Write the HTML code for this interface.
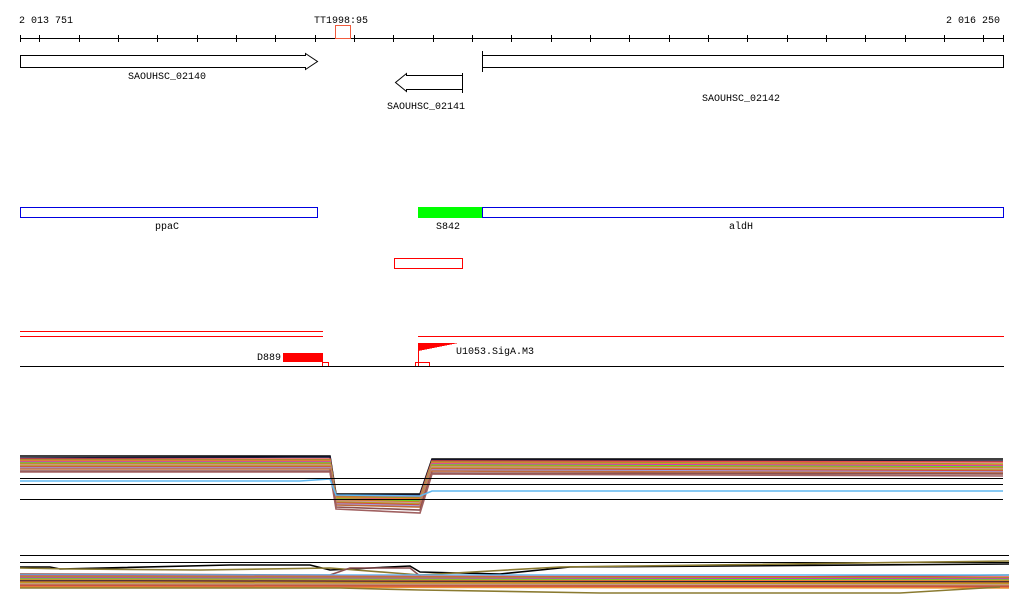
<!DOCTYPE html>
<html><head><meta charset="utf-8"><style>
html,body{margin:0;padding:0;background:#fff;width:1024px;height:611px;overflow:hidden}
text{font-family:"Liberation Mono","DejaVu Sans Mono",monospace;font-size:10px;fill:#000}
</style></head><body>
<svg width="1024" height="611" viewBox="0 0 1024 611" xmlns="http://www.w3.org/2000/svg" shape-rendering="crispEdges">
<text x="19" y="23">2 013 751</text>
<text x="314" y="23">TT1998:95</text>
<text x="946" y="23">2 016 250</text>
<line x1="20" y1="38.5" x2="1004" y2="38.5" stroke="#000"/>
<g stroke="#000">
<line x1="20.5" y1="35" x2="20.5" y2="42"/>
<line x1="39.5" y1="35" x2="39.5" y2="42"/><line x1="79.5" y1="35" x2="79.5" y2="42"/><line x1="118.5" y1="35" x2="118.5" y2="42"/><line x1="157.5" y1="35" x2="157.5" y2="42"/><line x1="197.5" y1="35" x2="197.5" y2="42"/><line x1="236.5" y1="35" x2="236.5" y2="42"/><line x1="275.5" y1="35" x2="275.5" y2="42"/><line x1="315.5" y1="35" x2="315.5" y2="42"/><line x1="354.5" y1="35" x2="354.5" y2="42"/><line x1="393.5" y1="35" x2="393.5" y2="42"/><line x1="433.5" y1="35" x2="433.5" y2="42"/><line x1="472.5" y1="35" x2="472.5" y2="42"/><line x1="511.5" y1="35" x2="511.5" y2="42"/><line x1="551.5" y1="35" x2="551.5" y2="42"/><line x1="590.5" y1="35" x2="590.5" y2="42"/><line x1="629.5" y1="35" x2="629.5" y2="42"/><line x1="669.5" y1="35" x2="669.5" y2="42"/><line x1="708.5" y1="35" x2="708.5" y2="42"/><line x1="747.5" y1="35" x2="747.5" y2="42"/><line x1="787.5" y1="35" x2="787.5" y2="42"/><line x1="826.5" y1="35" x2="826.5" y2="42"/><line x1="865.5" y1="35" x2="865.5" y2="42"/><line x1="905.5" y1="35" x2="905.5" y2="42"/><line x1="944.5" y1="35" x2="944.5" y2="42"/><line x1="983.5" y1="35" x2="983.5" y2="42"/><line x1="1003.5" y1="35" x2="1003.5" y2="42"/>
</g>
<rect x="335.5" y="25.5" width="15" height="13" fill="none" stroke="#f05a3c"/>
<polygon points="20.5,55.5 305.5,55.5 305.5,53.5 317.5,61.5 305.5,69.5 305.5,67.5 20.5,67.5" fill="#fff" stroke="#000" shape-rendering="auto"/>
<text x="128" y="79">SAOUHSC_02140</text>
<polygon points="462.5,75.5 406.5,75.5 406.5,73.5 395.5,82.5 406.5,91.5 406.5,89.5 462.5,89.5" fill="#fff" stroke="#000" shape-rendering="auto"/>
<line x1="462.5" y1="73" x2="462.5" y2="93" stroke="#000"/>
<text x="387" y="109">SAOUHSC_02141</text>
<polyline points="1004,55.5 482.5,55.5 482.5,67.5 1004,67.5" fill="none" stroke="#000"/>
<line x1="482.5" y1="51" x2="482.5" y2="72" stroke="#000"/>
<line x1="1003.5" y1="55" x2="1003.5" y2="68" stroke="#000"/>
<text x="702" y="101">SAOUHSC_02142</text>
<rect x="20.5" y="207.5" width="297" height="10" fill="none" stroke="#0000e0"/>
<text x="155" y="229">ppaC</text>
<rect x="418" y="207" width="64" height="11" fill="#00ff00"/>
<rect x="482.5" y="207.5" width="521" height="10" fill="none" stroke="#0000e0"/>
<text x="436" y="229">S842</text>
<text x="729" y="229">aldH</text>
<rect x="394.5" y="258.5" width="68" height="10" fill="none" stroke="#f00"/>
<line x1="20" y1="331.5" x2="323" y2="331.5" stroke="#f00"/>
<line x1="20" y1="336.5" x2="323" y2="336.5" stroke="#f00"/>
<line x1="418" y1="336.5" x2="1004" y2="336.5" stroke="#f00"/>
<text x="257" y="360">D889</text>
<rect x="283" y="353" width="40" height="9" fill="#f00"/>
<rect x="322.5" y="362.5" width="6" height="4" fill="none" stroke="#f00"/>
<polygon points="418,343 458,343 418,351" fill="#f00"/>
<line x1="418.5" y1="343" x2="418.5" y2="366" stroke="#f00"/>
<rect x="415.5" y="362.5" width="14" height="4" fill="none" stroke="#f00"/>
<text x="456" y="354">U1053.SigA.M3</text>
<line x1="20" y1="366.5" x2="1004" y2="366.5" stroke="#000"/>
<g fill="none" stroke-width="1.6" shape-rendering="auto">
<polyline stroke="#000" points="20,456 330,456 336,494 420,494 432,459 1003,459"/>
<polyline stroke="#1a1a3a" points="20,458 330,457 336,495 420,495 432,460 1003,461"/>
<polyline stroke="#e84a4a" points="20,459 330,459 336,496 420,497 432,461 1003,462"/>
<polyline stroke="#9b9b2a" points="20,460 330,460 336,497 420,498 432,462 1003,464"/>
<polyline stroke="#f07a3a" points="20,461 330,461 336,498 420,499 432,463 1003,465"/>
<polyline stroke="#c040c0" points="20,462 330,462 336,499 420,500 432,464 1003,466"/>
<polyline stroke="#66dd22" points="20,463 330,463 336,499 420,501 432,465 1003,467"/>
<polyline stroke="#d67a2a" points="20,464 330,464 336,500 420,502 432,466 1003,468"/>
<polyline stroke="#c89aa0" points="20,465 330,465 336,501 420,503 432,467 1003,469"/>
<polyline stroke="#b8a020" points="20,466 330,466 336,502 420,504 432,468 1003,470"/>
<polyline stroke="#d04848" points="20,467 330,467 336,503 420,505 432,469 1003,471"/>
<polyline stroke="#a0a0e0" points="20,468 330,468 336,504 420,506 432,470 1003,472"/>
<polyline stroke="#c06a3a" points="20,469 330,469 336,505 420,507 432,471 1003,473"/>
<polyline stroke="#8a5050" points="20,471 330,471 336,507 420,510 432,473 1003,474"/>
<polyline stroke="#a06060" points="20,472 330,472 336,509 420,513 432,474 1003,476"/>
<polyline stroke="#60b8f0" points="20,481 300,481 330,479 336,495 420,496 432,491 1003,491"/>
</g>
<line x1="20" y1="478.5" x2="1003" y2="478.5" stroke="#000"/>
<line x1="20" y1="484.5" x2="1003" y2="484.5" stroke="#000"/>
<line x1="20" y1="499.5" x2="1003" y2="499.5" stroke="#000"/>
<line x1="20" y1="555.5" x2="1009" y2="555.5" stroke="#000"/>
<line x1="20" y1="562.5" x2="1009" y2="562.5" stroke="#000"/>
<g fill="none" stroke-width="1.6" shape-rendering="auto">
<polyline stroke="#000" points="20,567 50,567 60,569 230,565 310,565 330,570 410,566 420,572 500,574 570,567 1009,564"/>
<polyline stroke="#8a7a30" points="20,568 70,569 200,570 330,568 420,575 560,567 1009,561"/>
<polyline stroke="#8a5050" points="20,574 330,575 350,568 410,568 425,580 1009,575"/>
<polyline stroke="#60b8f0" points="20,575 1009,575"/>
<polyline stroke="#e84a4a" points="20,576 1009,577"/>
<polyline stroke="#9b9b2a" points="20,577 1009,578"/>
<polyline stroke="#c040c0" points="20,578 1009,579"/>
<polyline stroke="#66dd22" points="20,579 1009,580"/>
<polyline stroke="#f07a3a" points="20,580 1009,581"/>
<polyline stroke="#1a1a3a" points="20,581 1009,582"/>
<polyline stroke="#d67a2a" points="20,582 1009,583"/>
<polyline stroke="#b8a020" points="20,583 1009,584"/>
<polyline stroke="#c89aa0" points="20,584 1009,585"/>
<polyline stroke="#c06a3a" points="20,585 1009,586"/>
<polyline stroke="#d04848" points="20,586 1009,587"/>
<polyline stroke="#e89030" points="20,587 1009,588"/>
<polyline stroke="#8a7a30" points="20,588 340,588 420,590 600,593 900,593 1000,587"/>
</g>
</svg>
</body></html>
